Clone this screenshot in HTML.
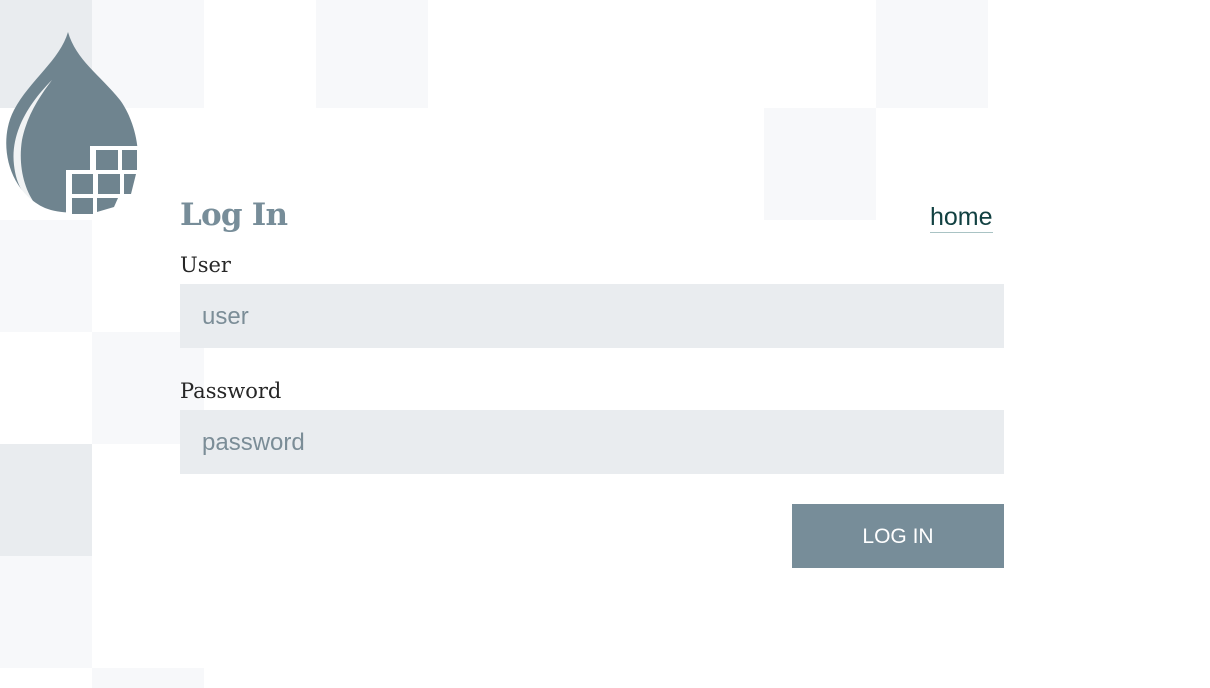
<!DOCTYPE html>
<html><head><style>
html,body{margin:0;width:1210px;height:688px;position:relative;overflow:hidden;background:#fff;font-family:"Liberation Sans",sans-serif}
.t{position:absolute;width:112px;height:112px;background:#f7f8fa}
.d{background:#e9ecef}
.h{position:absolute;left:180px;top:197px;font-family:"DejaVu Serif","Liberation Serif",serif;font-weight:bold;font-size:31px;color:#778d99;letter-spacing:-0.8px}
.lbl{position:absolute;left:180px;font-family:"DejaVu Serif","Liberation Serif",serif;font-size:21px;color:#262626}
.in{position:absolute;left:180px;width:824px;height:64px;background:#e9ecef;color:#7b8d97;font-size:24px;line-height:66px;padding-left:22px;box-sizing:border-box}
.home{position:absolute;left:930px;top:202px;font-size:25px;color:#124142;border-bottom:1px solid #a9c3c4;line-height:30px}
.btn{position:absolute;left:792px;top:504px;width:212px;height:64px;background:#778d99;color:#fff;font-size:21px;line-height:66px;text-align:center}
</style></head><body>
<div class="t d" style="left:-20px;top:-4px;height:112px"></div>
<div class="t" style="left:92px;top:-4px"></div>
<div class="t" style="left:316px;top:-4px"></div>
<div class="t" style="left:876px;top:-4px"></div>
<div class="t" style="left:764px;top:108px"></div>
<div class="t" style="left:-20px;top:220px"></div>
<div class="t" style="left:92px;top:332px"></div>
<div class="t d" style="left:-20px;top:444px"></div>
<div class="t" style="left:-20px;top:556px"></div>
<div class="t" style="left:92px;top:668px;height:20px"></div>
<svg style="position:absolute;left:0;top:0" width="150" height="220" viewBox="0 0 150 220">
<path d="M68 32 C60 60 30 80 14 110 C-2 140 6 190 45 208 C70 218 115 212 132 185 C145 160 135 120 120 100 C100 75 76 60 68 32Z" fill="#6f848f"/>
<path d="M52 80 C30 102 10 132 14 165 C16 185 25 198 36 205 C24 190 18 165 22 140 C27 115 40 96 52 80Z" fill="#fff" opacity="0.9"/>
<polygon points="90,146 150,146 150,220 66,220 66,170 90,170" fill="#fff"/>
<g fill="#6f848f">
<rect x="96" y="150" width="22" height="20"/><rect x="122" y="150" width="15" height="20"/>
<rect x="72" y="174" width="21" height="20"/><rect x="98" y="174" width="22" height="20"/><polygon points="124,174 136,174 131,194 124,194"/>
<rect x="72" y="198" width="21" height="16"/><polygon points="97,198 118,198 114,207 97,212"/>
</g>
</svg>
<div class="h">Log In</div>
<div class="home">home</div>
<div class="lbl" style="top:253px">User</div>
<div class="in" style="top:284px">user</div>
<div class="lbl" style="top:379px">Password</div>
<div class="in" style="top:410px">password</div>
<div class="btn">LOG IN</div>
</body></html>
